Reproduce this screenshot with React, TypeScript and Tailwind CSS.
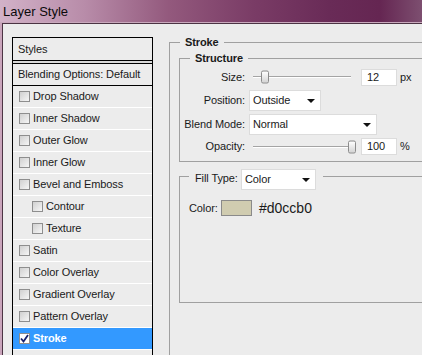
import React from "react";

const styleRows = [
  { label: "Drop Shadow" },
  { label: "Inner Shadow" },
  { label: "Outer Glow" },
  { label: "Inner Glow" },
  { label: "Bevel and Emboss" },
  { label: "Contour", sub: true },
  { label: "Texture", sub: true },
  { label: "Satin" },
  { label: "Color Overlay" },
  { label: "Gradient Overlay" },
  { label: "Pattern Overlay" },
  { label: "Stroke", checked: true },
];

function CheckBox({ checked }: { checked?: boolean }) {
  return (
    <span
      className={`flex h-[11px] w-[11px] shrink-0 items-center justify-center border border-[#8e8e8e] ${
        checked ? "bg-white" : "bg-linear-to-br from-[#d0d0d0] to-[#f6f6f6]"
      }`}
    >
      {checked && (
        <svg width="9" height="9" viewBox="0 0 9 9">
          <path d="M1 4.5 L3.5 7.5 L8 1" fill="none" stroke="#16206e" strokeWidth="1.8" />
        </svg>
      )}
    </span>
  );
}

function Arrow() {
  return (
    <svg width="8" height="4" viewBox="0 0 8 4">
      <path d="M0 0h8L4 4z" fill="#111" />
    </svg>
  );
}

function Select({ value, width }: { value: string; width: string }) {
  return (
    <div
      className={`flex h-[21px] ${width} items-center justify-between border border-[#dcdcdc] bg-white pl-[3px] pr-[5px]`}
    >
      <span>{value}</span>
      <Arrow />
    </div>
  );
}

function Slider({ thumb }: { thumb: string }) {
  return (
    <div className="relative ml-[8px] flex h-full w-[98px] items-center">
      <div className="h-[2px] w-full border-t border-[#a4a4a4] bg-white" />
      <div
        className={`absolute top-1/2 ${thumb} h-[13px] w-[8px] -translate-y-1/2 rounded-[2px] border border-[#8c8c8c] bg-linear-to-b from-white to-[#d4d4d4]`}
      />
    </div>
  );
}

function NumberBox({ value, unit }: { value: string; unit: string }) {
  return (
    <>
      <div className="ml-[10px] flex h-[17px] w-[36px] items-center border border-[#dcdcdc] bg-white pl-[5px]">
        {value}
      </div>
      <span className="ml-[3px]">{unit}</span>
    </>
  );
}

export default function App() {
  return (
    <div
      className="flex h-[355px] w-[422px] flex-col overflow-hidden bg-[#ececec] text-[11px] leading-[13px] tracking-[-0.1px] text-[#1a1a1a]"
      style={{ fontFamily: '"Liberation Sans", Arial, sans-serif' }}
    >
      {/* title bar */}
      <div className="flex h-[23px] shrink-0 items-center border-b border-[#c9a9bd] bg-[linear-gradient(90deg,#d2b2c8_0%,#b88ca9_20%,#93597d_40%,#7a3c66_60%,#692b57_78%,#652652_90%,#7d4f70_100%)] pl-[3px]">
        <span className="text-[13px] tracking-normal text-[#0a0a0a]">Layer Style</span>
      </div>

      <div className="flex flex-1 bg-[#c9a4bb] pl-[2px]">
        <div className="flex flex-1 border-l border-t border-[#4b3343] bg-[#ececec]">
          {/* styles list */}
          <div className="ml-[9px] mt-[13px] w-[141px] shrink-0 border-l border-r border-t border-black">
            <div className="flex h-[23px] items-center border-b border-black pl-[5px]">Styles</div>
            <div className="h-[2px] bg-[#d8d8d8]" />
            <div className="flex h-[23px] items-center border-y border-black pl-[5px]">
              Blending Options: Default
            </div>
            {styleRows.map((r) => (
              <div
                key={r.label}
                className={`flex h-[22px] items-center gap-[3px] border-b border-white ${
                  r.sub ? "pl-[19px]" : "pl-[6px]"
                } ${r.checked ? "bg-[#3399ff] font-bold text-white" : ""}`}
              >
                <CheckBox checked={r.checked} />
                <span>{r.label}</span>
              </div>
            ))}
          </div>

          {/* stroke panel */}
          <fieldset className="ml-[16px] mt-[12px] min-w-0 flex-1 border-l border-t border-[#a0a0a0]">
            <legend className="ml-[10px] px-[5px] font-bold">Stroke</legend>

            <fieldset className="ml-[9px] mt-[3px] min-w-0 border-y border-l border-[#a0a0a0] pb-[6px]">
              <legend className="ml-[10px] px-[5px] font-bold">Structure</legend>
              <div className="mt-[3px] flex h-[18px] items-center">
                <span className="w-[65px] text-right">Size:</span>
                <Slider thumb="left-[8px]" />
                <NumberBox value="12" unit="px" />
              </div>
              <div className="mt-[4px] flex h-[21px] items-center">
                <span className="w-[65px] text-right">Position:</span>
                <div className="ml-[4px]">
                  <Select value="Outside" width="w-[72px]" />
                </div>
              </div>
              <div className="mt-[3px] flex h-[21px] items-center">
                <span className="w-[65px] text-right">Blend Mode:</span>
                <div className="ml-[4px]">
                  <Select value="Normal" width="w-[128px]" />
                </div>
              </div>
              <div className="mt-[3px] flex h-[17px] items-center">
                <span className="w-[65px] text-right">Opacity:</span>
                <Slider thumb="left-[95px]" />
                <NumberBox value="100" unit="%" />
              </div>
            </fieldset>

            <fieldset className="ml-[9px] mt-[7px] h-[134px] min-w-0 border-y border-l border-[#a0a0a0]">
              <legend className="ml-[9px] flex h-[14px] items-start pl-[6px] pr-[7px]">
                <span className="mt-[3px] w-[46px]">Fill Type:</span>
                <Select value="Color" width="w-[75px]" />
              </legend>
              <div className="mt-[17px] flex items-center pl-[9px]">
                <span className="w-[32px]">Color:</span>
                <div className="h-[16px] w-[31px] border border-[#8a8a8a] bg-[#d0ccb0]" />
                <span className="ml-[7px] text-[14px] tracking-normal">#d0ccb0</span>
              </div>
            </fieldset>
          </fieldset>
        </div>
      </div>
    </div>
  );
}
